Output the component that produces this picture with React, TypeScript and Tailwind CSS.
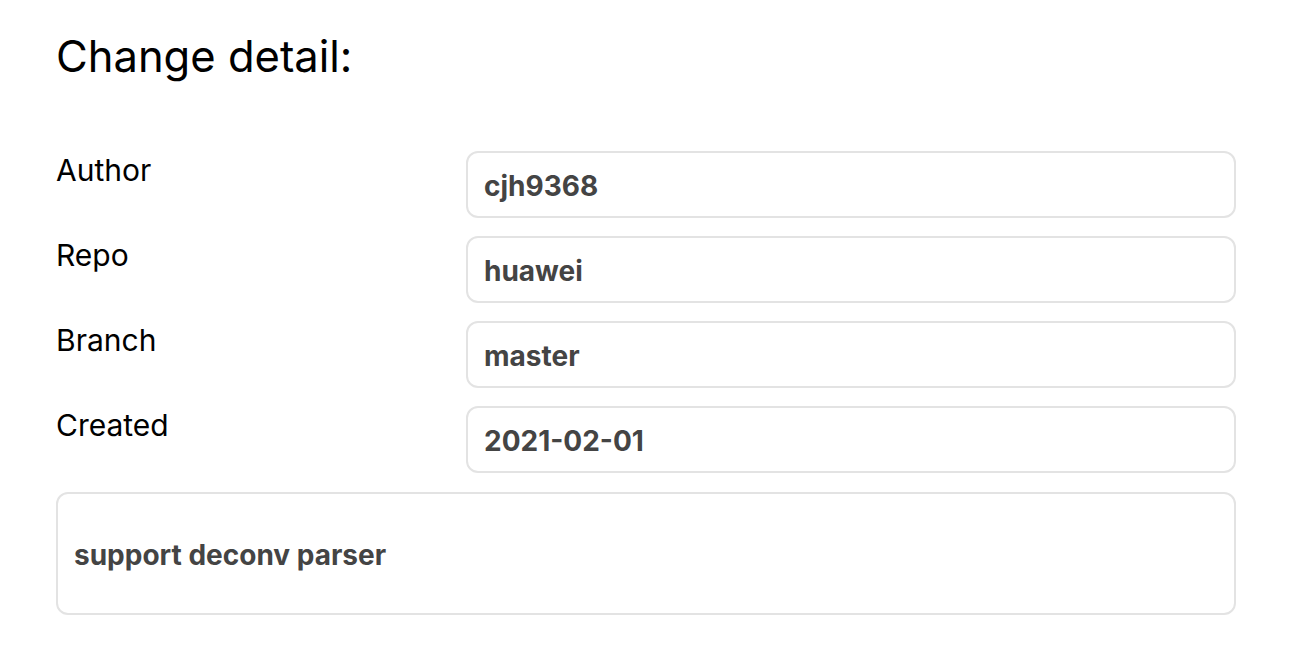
const fields = [
  { label: 'Author', value: 'cjh9368' },
  { label: 'Repo', value: 'huawei' },
  { label: 'Branch', value: 'master' },
  { label: 'Created', value: '2021-02-01' },
]

export default function App() {
  return (
    <div className="min-h-screen bg-white px-14 pt-[30px] font-['Inter',sans-serif] text-black">
      <h1 className="text-[43.5px] leading-[53px] font-normal">Change detail:</h1>

      <div className="mt-[68px] flex w-[1180px] flex-col gap-[18px]">
        {fields.map((field) => (
          <div key={field.label} className="flex items-start">
            <div className="w-[410px] pt-px text-[30px] leading-[36px]">{field.label}</div>
            <div className="flex-1 rounded-xl border-2 border-[#e3e3e3] px-4 pt-[17px] pb-[14px] text-[28px] leading-[32px] font-bold text-[#444]">
              {field.value}
            </div>
          </div>
        ))}

        <div className="mt-px rounded-xl border-2 border-[#e3e3e3] px-4 pt-[45px] pb-[42px] text-[28px] leading-[32px] font-bold text-[#444]">
          support deconv parser
        </div>
      </div>
    </div>
  )
}
